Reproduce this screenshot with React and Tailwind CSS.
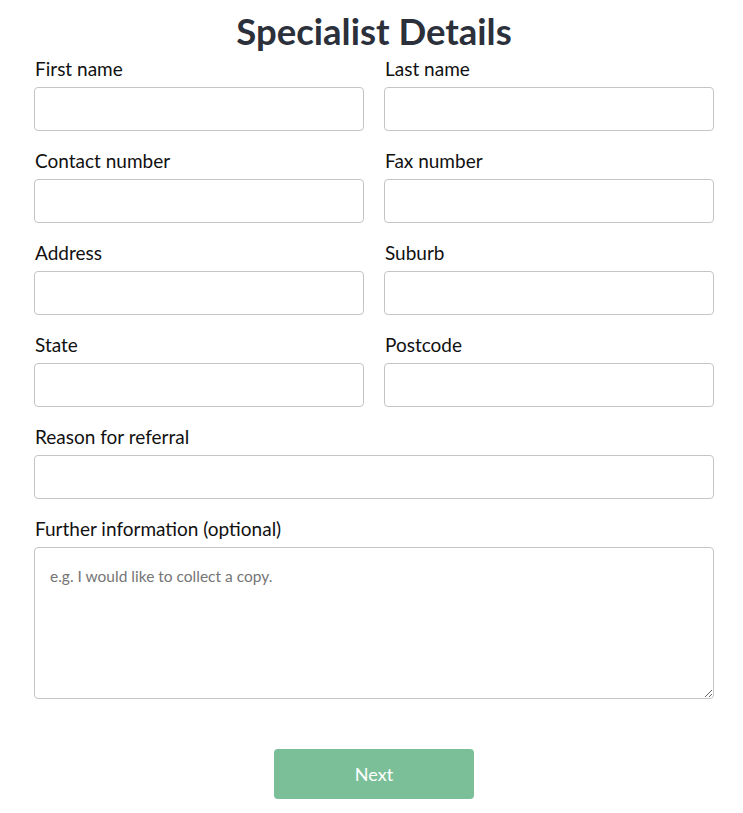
import React from "react";

function Field({ label, full }) {
  return (
    <div className={full ? "col-span-2 flex flex-col" : "flex flex-col"}>
      <label className="text-[19px] leading-[22px] text-[#111111] pl-[1px]">{label}</label>
      <input className="mt-[7px] h-[44px] w-full rounded-[4px] border border-[#c4c4c4] bg-white px-3 outline-none" />
    </div>
  );
}

export default function App() {
  return (
    <div className="min-h-[813px] bg-white" style={{ fontFamily: "Lato, 'Open Sans', sans-serif" }}>
      <div className="ml-[34px] w-[680px] pt-[9px]">
        <h1 className="text-center text-[36.5px] leading-[44px] font-bold text-[#2b303b]">Specialist Details</h1>
        <div className="mt-[5px] grid grid-cols-2 gap-x-[20px] gap-y-[19px]">
          <Field label="First name" />
          <Field label="Last name" />
          <Field label="Contact number" />
          <Field label="Fax number" />
          <Field label="Address" />
          <Field label="Suburb" />
          <Field label="State" />
          <Field label="Postcode" />
          <Field label="Reason for referral" full />
          <div className="col-span-2 flex flex-col">
            <label className="text-[19px] leading-[22px] text-[#111111] pl-[1px]">Further information (optional)</label>
            <textarea
              placeholder="e.g. I would like to collect a copy."
              className="mt-[7px] h-[152px] w-full rounded-[4px] border border-[#c4c4c4] bg-white px-[15px] py-[18px] text-[15.5px] leading-[20px] outline-none placeholder:text-[#757575]"
            />
          </div>
        </div>
        <div className="mt-[50px] flex justify-center">
          <button className="h-[50px] w-[200px] rounded-[4px] bg-[#7bbf99] text-[18px] text-white">Next</button>
        </div>
      </div>
    </div>
  );
}
